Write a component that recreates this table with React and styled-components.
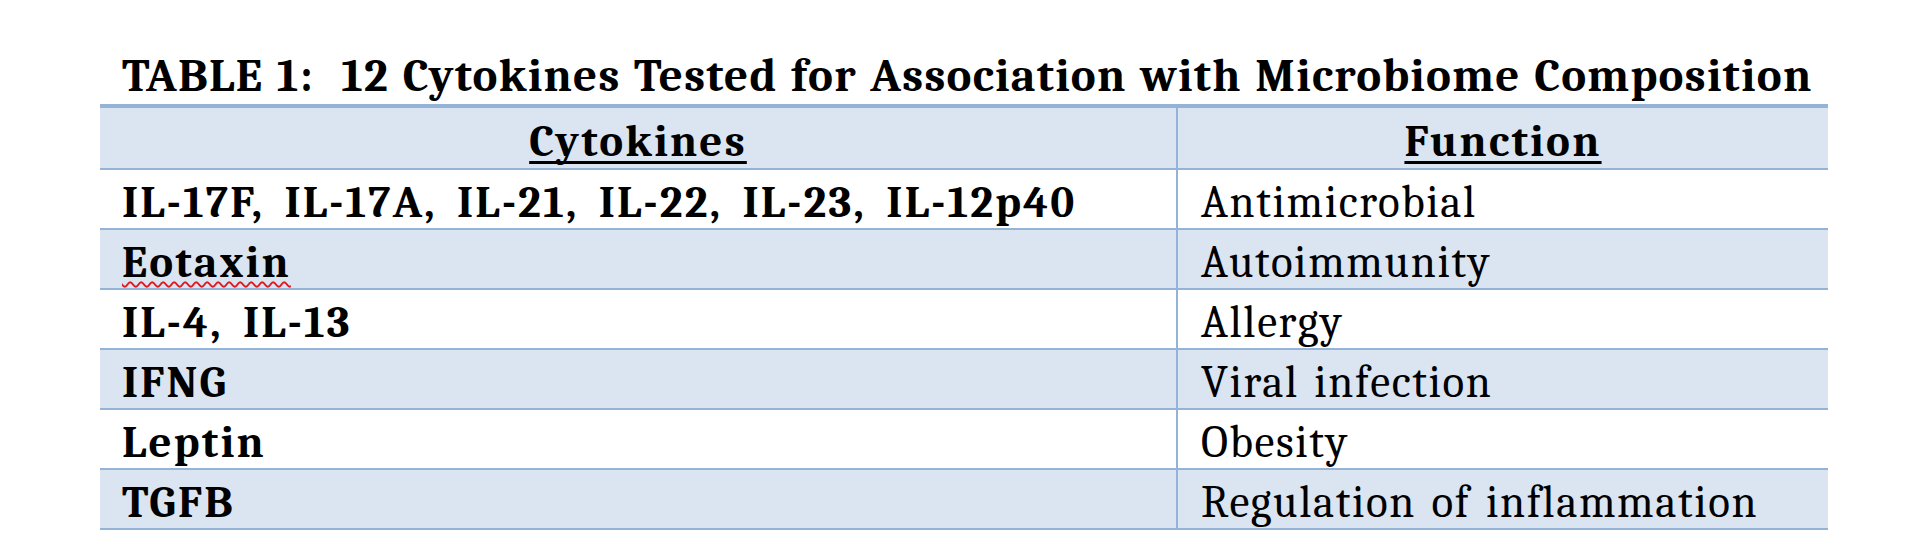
import React from 'react';
import styled, { createGlobalStyle } from 'styled-components';

const Global = createGlobalStyle`
  html, body { margin: 0; padding: 0; background: #ffffff; }
  body { font-family: "Caladea", "Cambria", "DejaVu Serif Condensed", serif; color: #000; }
`;

const LINE = '#95b3d7';
const SHADE = '#dbe5f1';

const Page = styled.div`
  width: 1920px;
  height: 550px;
  padding: 49px 0 0 100px;
  box-sizing: border-box;
`;

const Title = styled.h1`
  margin: 0;
  padding-left: 22px;
  font-size: 47px;
  line-height: 55px;
  font-weight: 700;
  letter-spacing: 1.25px;
  word-spacing: 2px;
  white-space: pre;
`;

const Table = styled.div`
  width: 1728px;
  border-top: 4px solid ${LINE};
`;

const Row = styled.div`
  display: grid;
  grid-template-columns: 1076px 652px;
  height: ${p => (p.$header ? 62 : 60)}px;
  box-sizing: border-box;
  border-bottom: 2px solid ${LINE};
  background: ${p => (p.$shaded ? SHADE : '#ffffff')};
`;

const Cell = styled.div`
  box-sizing: border-box;
  padding-top: 6px;
  padding-left: ${p => (p.$header ? 0 : p.$second ? 23 : 22)}px;
  border-left: ${p => (p.$second ? `2px solid ${LINE}` : 'none')};
  font-size: 45px;
  line-height: ${p => (p.$header ? 54 : 52)}px;
  font-weight: ${p => (p.$bold ? 700 : 400)};
  letter-spacing: ${p => (p.$bold ? 2.2 : 1.6)}px;
  word-spacing: ${p => (p.$bold ? 8 : 4)}px;
  text-align: ${p => (p.$header ? 'center' : 'left')};
  white-space: nowrap;
`;

const HeadLabel = styled.span`
  text-decoration: underline;
  text-decoration-thickness: 3px;
  text-underline-offset: 5px;
  text-decoration-skip-ink: none;
`;

const Misspelled = styled.span`
  text-decoration: underline wavy #e0191e;
  text-decoration-thickness: 1.5px;
  text-underline-offset: 4px;
  text-decoration-skip-ink: none;
`;

const rows = [
  { name: 'IL-17F, IL-17A, IL-21, IL-22, IL-23, IL-12p40', fn: 'Antimicrobial' },
  { name: 'Eotaxin', fn: 'Autoimmunity', misspelled: true },
  { name: 'IL-4, IL-13', fn: 'Allergy' },
  { name: 'IFNG', fn: 'Viral infection' },
  { name: 'Leptin', fn: 'Obesity' },
  { name: 'TGFB', fn: 'Regulation of inflammation' },
];

export default function App() {
  return (
    <>
      <Global />
      <Page>
        <Title>{'TABLE 1:  12 Cytokines Tested for Association with Microbiome Composition'}</Title>
        <Table>
          <Row $header $shaded>
            <Cell $header $bold><HeadLabel>Cytokines</HeadLabel></Cell>
            <Cell $header $bold $second><HeadLabel>Function</HeadLabel></Cell>
          </Row>
          {rows.map((r, i) => (
            <Row key={r.name} $shaded={i % 2 === 1}>
              <Cell $bold>{r.misspelled ? <Misspelled>{r.name}</Misspelled> : r.name}</Cell>
              <Cell $second>{r.fn}</Cell>
            </Row>
          ))}
        </Table>
      </Page>
    </>
  );
}
